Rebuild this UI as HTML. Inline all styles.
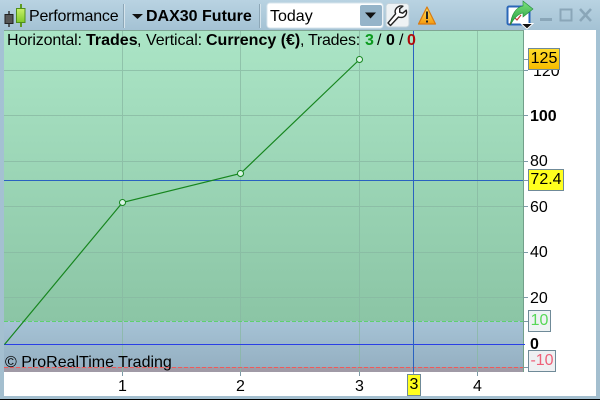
<!DOCTYPE html>
<html><head><meta charset="utf-8">
<style>
html,body{margin:0;padding:0;width:600px;height:400px;overflow:hidden;background:#000}
#w{position:absolute;left:0;top:0;width:600px;height:399px;background:linear-gradient(#b9d3e2,#a4c2d4 30px,#a4bfcf);overflow:hidden}
#c{position:absolute;left:4px;top:30px;width:592px;height:366px;background:#fff}
.t{position:absolute;font-family:"Liberation Sans",sans-serif;font-size:16px;line-height:18px;white-space:nowrap;color:#000}
.b{font-weight:bold}
.sep{position:absolute;top:4px;width:1px;height:24px;background:#8da7b7;border-right:1px solid #d5e4ec}
.lab{position:absolute;box-sizing:border-box;border:1px solid #6f8a98;font-family:"Liberation Sans",sans-serif;font-size:16px;line-height:20px;text-align:center}
svg{position:absolute;left:0;top:0}
</style></head><body>
<div id="w">
<div id="c"></div>
<svg width="600" height="400">
<defs>
<linearGradient id="g1" x1="0" y1="0" x2="0" y2="1"><stop offset="0" stop-color="#abe5c6"/><stop offset="1" stop-color="#8bc5a5"/></linearGradient>
<linearGradient id="g2" x1="0" y1="0" x2="0" y2="1"><stop offset="0" stop-color="#a6c3d6"/><stop offset="1" stop-color="#95b0c2"/></linearGradient>
<linearGradient id="gc" x1="0" y1="0" x2="0" y2="1"><stop offset="0" stop-color="#c9f06a"/><stop offset="1" stop-color="#7fc92a"/></linearGradient>
<linearGradient id="wa" x1="0" y1="0" x2="0" y2="1"><stop offset="0" stop-color="#ffe45a"/><stop offset="1" stop-color="#f59a10"/></linearGradient>
<linearGradient id="ar" x1="0" y1="0" x2="0" y2="1"><stop offset="0" stop-color="#7fe27f"/><stop offset="1" stop-color="#1f9a3a"/></linearGradient>
</defs>
<rect x="4" y="30" width="520" height="291" fill="url(#g1)"/>
<rect x="4" y="321" width="520" height="46" fill="url(#g2)"/>
<rect x="4" y="367" width="520" height="5" fill="#a09aa6"/>
<rect x="523" y="30" width="1" height="342" fill="#72a08a"/>
<rect x="4" y="30" width="520" height="1" fill="#7fa593"/>
<g stroke="#88b8a2" stroke-width="1" opacity=".75">
<path d="M122.500 31V372M240.500 31V372M359.500 31V372M477.500 31V372"/>
<path d="M4 70.500H523M4 115.500H523M4 161.500H523M4 206.500H523M4 252.500H523M4 297.500H523"/>
</g>
<g stroke="#7f9aa8" stroke-width="1"><path d="M122.500 372V376M240.500 372V376M359.500 372V376M477.500 372V376M524 70.500h4M524 115.500h4M524 161.500h4M524 206.500h4M524 252.500h4M524 297.500h4M524 321.500h4M524 367.500h4M524 59.500h4M524 180.500h4M413.500 372v3"/></g>
<path d="M4 321.500H523" stroke="#5fd070" stroke-width="1" stroke-dasharray="4 2"/>
<path d="M4 367.500H523" stroke="#f05a5a" stroke-width="1" stroke-dasharray="4 2"/>
<path d="M4 344.500H525" stroke="#2a3fe6" stroke-width="1"/>
<path d="M4 180.500H523M413.500 31V372" stroke="#2a62c0" stroke-width="1"/>
<path d="M4.500 344.500L122.500 202.500L240.500 173.500L359.500 59.500" fill="none" stroke="#17861f" stroke-width="1.200"/>
<g fill="#d8f4e4" stroke="#17861f" stroke-width="1"><circle cx="122.500" cy="202.500" r="3"/><circle cx="240.500" cy="173.500" r="3"/><circle cx="359.500" cy="59.500" r="3"/></g>
<!-- candle icon -->
<path d="M9 11V27" stroke="#333" stroke-width="1.500"/>
<rect x="5" y="14.500" width="8" height="9" fill="#555" stroke="#222"/>
<path d="M21 4V27" stroke="#5d9b1f" stroke-width="2"/>
<rect x="16.500" y="8.500" width="8.500" height="14" fill="url(#gc)" stroke="#4f8f1c"/>
<!-- arrows -->
<path d="M132 14h11l-5.500 5z" fill="#111"/>
<!-- dropdown -->
<rect x="267" y="3" width="116" height="25" rx="3" fill="#fff" stroke="#d7e4ec"/>
<rect x="360" y="5" width="22" height="21" rx="2" fill="#95b4c9"/>
<path d="M365 12.500h11l-5.500 6z" fill="#111"/>
<!-- wrench -->
<rect x="386" y="3.500" width="23" height="23.500" rx="3" fill="#eef2f4" stroke="#c3d2da"/>
<path d="M388 23l2.500 2.500 8-8.500c3 1 6 .3 7.500-2.500 .8-1.700 .7-3 .2-4.300l-3.500 3-3-1 0-3.500 3.200-2.500c-2.500-.6-5 .2-6.700 2.300-1.300 1.700-1.300 3.700-.6 5.300z" fill="#fff" stroke="#222" stroke-width="1.400" stroke-linejoin="round"/>
<!-- warning -->
<path d="M427 7l8.500 17h-17z" fill="url(#wa)" stroke="#d97a10" stroke-width="1.200" stroke-linejoin="round"/>
<path d="M427 11.500v7.500M427 20.500v2" stroke="#222" stroke-width="2"/>
<!-- export icon -->
<rect x="507.500" y="6.500" width="22" height="18" rx="1.500" fill="#fff" stroke="#2b67b8" stroke-width="2"/>
<path d="M510 24l4-7 3 3 4-5" fill="none" stroke="#c93434" stroke-width="1.200"/>
<path d="M510.500 25C511 15 516 7 523 6V1L533 9L523 17V13C518 14 514 18 510.500 25z" fill="url(#ar)" stroke="#1f8a3a" stroke-width=".6"/>
<path d="M521 23.500h12l-6 5.500z" fill="#111" stroke="#fff" stroke-width="1"/>
<!-- window buttons -->
<rect x="540" y="18" width="12" height="3" fill="#8aa6b8"/>
<rect x="560.500" y="9.500" width="11" height="11" fill="none" stroke="#8aa6b8" stroke-width="2"/>
<path d="M580 9l11 12M591 9l-11 12" stroke="#8aa6b8" stroke-width="2.600"/>
</svg>
<div class="sep" style="left:123px"></div>
<div class="sep" style="left:259px"></div>
<div class="t" style="left:29px;top:8px;letter-spacing:-.2px">Performance</div>
<div class="t b" style="left:146px;top:8px">DAX30 Future</div>
<div class="t" style="left:270px;top:8px">Today</div>
<div class="t" style="left:7px;top:32px;letter-spacing:-.15px">Horizontal:</div>
<div class="t b" style="left:86px;top:32px">Trades</div>
<div class="t" style="left:137px;top:32px">,</div>
<div class="t" style="left:146px;top:32px;letter-spacing:-.1px">Vertical:</div>
<div class="t b" style="left:206px;top:32px">Currency (€)</div>
<div class="t" style="left:300px;top:32px">,</div>
<div class="t" style="left:308px;top:32px;letter-spacing:-.25px">Trades:</div>
<div class="t b" style="left:365px;top:32px;color:#0b9a1e">3</div>
<div class="t" style="left:377px;top:32px">/</div>
<div class="t b" style="left:386px;top:32px">0</div>
<div class="t" style="left:399px;top:32px">/</div>
<div class="t b" style="left:407px;top:32px;color:#b00a0a">0</div>
<div class="t" style="left:5px;top:354px">© ProRealTime Trading</div>
<div class="t" style="left:533px;top:63px">120</div>
<div class="t b" style="left:530px;top:108px">100</div>
<div class="t" style="left:530px;top:153px">80</div>
<div class="t" style="left:530px;top:199px">60</div>
<div class="t" style="left:530px;top:244px">40</div>
<div class="t" style="left:530px;top:290px">20</div>
<div class="t b" style="left:530px;top:336px">0</div>
<div class="t" style="left:118px;top:378px">1</div>
<div class="t" style="left:236px;top:378px">2</div>
<div class="t" style="left:355px;top:378px">3</div>
<div class="t" style="left:473px;top:378px">4</div>
<div class="lab" style="left:528px;top:48px;width:32px;height:22px;background:linear-gradient(#ffdc2a,#f6bc00)">125</div>
<div class="lab" style="left:528px;top:169px;width:36px;height:22px;background:#ffff1e">72.4</div>
<div class="lab" style="left:528px;top:310px;width:23px;height:22px;background:#eef3f4;color:#58d858">10</div>
<div class="lab" style="left:528px;top:350px;width:28px;height:22px;background:#eef0f2;color:#ee6078">-10</div>
<div class="lab" style="left:407px;top:374px;width:14px;height:22px;background:#ffff1e">3</div>
</div>
</body></html>
